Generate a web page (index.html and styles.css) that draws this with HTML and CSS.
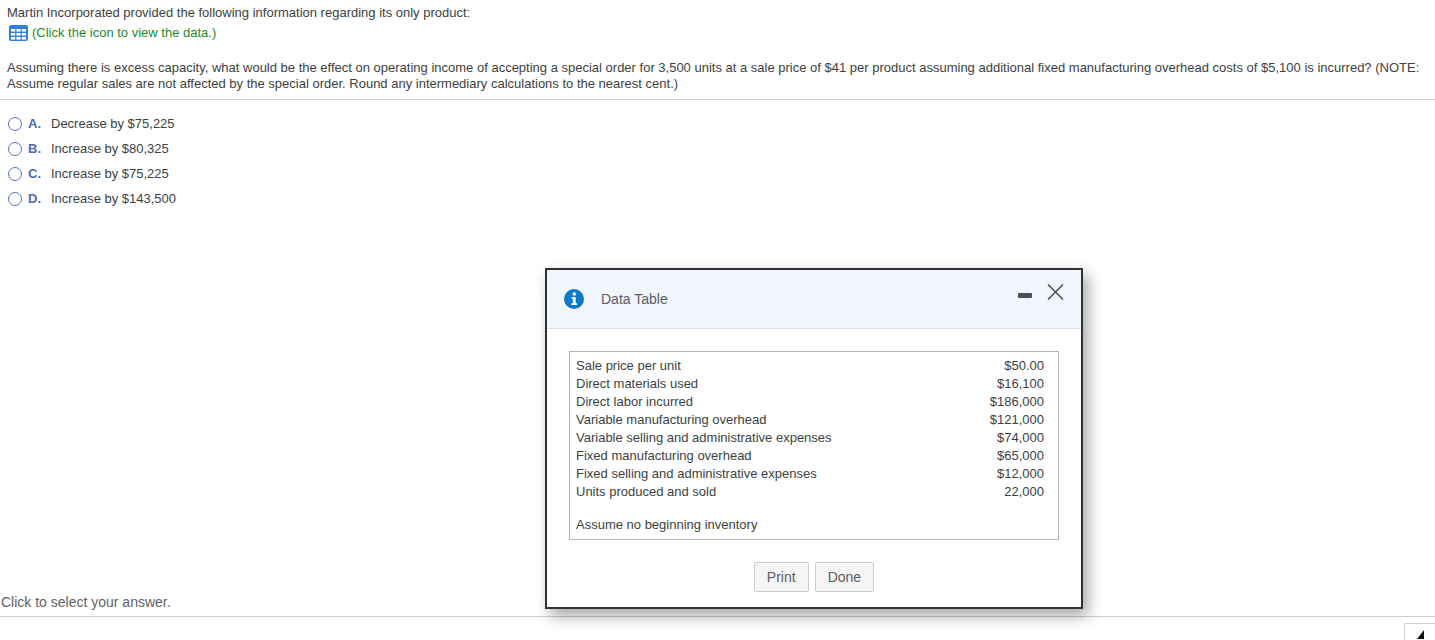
FILE: index.html
```html
<!DOCTYPE html>
<html lang="en">
<head>
<meta charset="utf-8">
<title>Data Table</title>
<link rel="stylesheet" href="styles.css">
</head>
<body>
<div class="page">
  <section class="question">
    <p class="intro">Martin Incorporated provided the following information regarding its only product:</p>
    <p class="hint">
      <svg class="grid-icon" width="19" height="16" viewBox="0 0 19 16" aria-hidden="true">
        <rect x="0" y="0" width="19" height="16" rx="2" fill="#2f7fd6"/>
        <g fill="#fff">
          <rect x="2" y="4" width="4.2" height="2.6"/><rect x="7.4" y="4" width="4.2" height="2.6"/><rect x="12.8" y="4" width="4.2" height="2.6"/>
          <rect x="2" y="8" width="4.2" height="2.6"/><rect x="7.4" y="8" width="4.2" height="2.6"/><rect x="12.8" y="8" width="4.2" height="2.6"/>
          <rect x="2" y="12" width="4.2" height="2.6"/><rect x="7.4" y="12" width="4.2" height="2.6"/><rect x="12.8" y="12" width="4.2" height="2.6"/>
        </g>
      </svg>
      <span>(Click the icon to view the data.)</span>
    </p>
    <p class="stem">Assuming there is excess capacity, what would be the effect on operating income of accepting a special order for 3,500 units at a sale price of $41 per product assuming additional fixed manufacturing overhead costs of $5,100 is incurred? (NOTE: Assume regular sales are not affected by the special order. Round any intermediary calculations to the nearest cent.)</p>
  </section>
  <ul class="options">
    <li class="option"><span class="radio"></span><b class="letter">A.</b><span>Decrease by $75,225</span></li>
    <li class="option"><span class="radio"></span><b class="letter">B.</b><span>Increase by $80,325</span></li>
    <li class="option"><span class="radio"></span><b class="letter">C.</b><span>Increase by $75,225</span></li>
    <li class="option"><span class="radio"></span><b class="letter">D.</b><span>Increase by $143,500</span></li>
  </ul>
  <footer class="footer">
    <p class="status">Click to select your answer.</p>
    <div class="footer-bar"><div class="next"><span class="arrow"></span></div></div>
  </footer>
</div>
<div class="modal">
  <header class="modal-head">
    <svg class="info" width="20" height="20" viewBox="0 0 20 20" aria-hidden="true">
      <circle cx="10" cy="10" r="10" fill="#0b78c8"/>
      <circle cx="10.3" cy="5" r="1.8" fill="#fff"/>
      <path d="M7.6 8h4.1v6.2h1.4V16H7.4v-1.8h1.5V9.8H7.6z" fill="#fff"/>
    </svg>
    <span class="modal-title">Data Table</span>
    <span class="minimize"></span>
    <svg class="close" width="17" height="16" viewBox="0 0 17 16" aria-hidden="true">
      <path d="M1 .5 16 15.5M16 .5 1 15.5" stroke="#4a4f55" stroke-width="1.5" fill="none"/>
    </svg>
  </header>
  <div class="modal-body">
    <div class="data-box">
      <table class="data">
        <tr><td>Sale price per unit</td><td class="num">$50.00</td></tr>
        <tr><td>Direct materials used</td><td class="num">$16,100</td></tr>
        <tr><td>Direct labor incurred</td><td class="num">$186,000</td></tr>
        <tr><td>Variable manufacturing overhead</td><td class="num">$121,000</td></tr>
        <tr><td>Variable selling and administrative expenses</td><td class="num">$74,000</td></tr>
        <tr><td>Fixed manufacturing overhead</td><td class="num">$65,000</td></tr>
        <tr><td>Fixed selling and administrative expenses</td><td class="num">$12,000</td></tr>
        <tr><td>Units produced and sold</td><td class="num">22,000</td></tr>
      </table>
      <p class="note">Assume no beginning inventory</p>
    </div>
    <div class="actions">
      <button class="btn print">Print</button>
      <button class="btn done">Done</button>
    </div>
  </div>
</div>
</body>
</html>
```
FILE: styles.css
```css
* { box-sizing: border-box; }
html, body { margin: 0; padding: 0; }
body {
  width: 1435px;
  height: 640px;
  overflow: hidden;
  position: relative;
  background: #fff;
  color: #3c3f43;
  font-family: "Liberation Sans", Arial, sans-serif;
  font-size: 13px;
}
p { margin: 0; }
.page { height: 640px; display: flex; flex-direction: column; }
.question { padding: 5px 7px 8px; border-bottom: 1px solid #cfcfcf; height: 100px; }
.intro { line-height: 16px; }
.hint { display: flex; align-items: center; gap: 4px; margin-top: 4px; line-height: 16px; color: #1f8a1f; padding-left: 2px; }
.grid-icon { flex: none; }
.stem { margin-top: 19px; line-height: 16px; }
.options { list-style: none; margin: 11px 0 0; padding: 0 0 0 8px; }
.option { display: flex; align-items: center; height: 25px; }
.radio { width: 14px; height: 14px; border: 1.3px solid #5a70bd; border-radius: 50%; flex: none; margin-right: 6px; }
.letter { width: 23px; color: #5168b8; flex: none; font-weight: bold; }
.footer { margin-top: auto; }
.status { padding-left: 1px; line-height: 16px; color: #5f6266; margin-bottom: 6px; font-size: 14px; }
.footer-bar { height: 24px; border-top: 1px solid #cfcfcf; display: flex; justify-content: flex-end; padding-top: 6px; }
.next { width: 31px; height: 30px; border: 1px solid #d5d5d5; border-right: 0; padding: 6px 0 0 12px; background: #fff; }
.arrow { display: block; width: 0; height: 0; border-style: solid; border-width: 0 0 9px 7px; border-color: transparent transparent #111 transparent; }
.modal {
  position: absolute;
  left: 545px;
  top: 268px;
  width: 538px;
  height: 341px;
  background: #fff;
  border: 2px solid #2f3336;
  box-shadow: 5px 7px 14px rgba(0,0,0,.35);
  display: flex;
  flex-direction: column;
}
.modal-head {
  height: 59px;
  background: #f1f6fd;
  border-bottom: 1px solid #d5e2ef;
  display: flex;
  align-items: center;
  padding: 0 17px;
  flex: none;
}
.info { flex: none; }
.modal-title { margin-left: 17px; font-size: 14px; color: #5a5e63; flex: 1; }
.minimize { width: 14px; height: 5px; background: #4a4f55; border-radius: 1px; margin-top: -8px; }
.close { margin: -14px 0 0 15px; flex: none; }
.modal-body { padding: 22px 22px 0; display: flex; flex-direction: column; flex: 1; }
.data-box { height: 189px; border: 1px solid #b5b5b5; padding: 5px 14px 0 6px; }
.data { width: 100%; border-collapse: collapse; }
.data td { padding: 0; height: 18px; line-height: 18px; }
.data .num { text-align: right; }
.note { margin-top: 15px; line-height: 18px; }
.actions { display: flex; justify-content: center; gap: 6px; margin-top: 22px; }
.btn {
  height: 30px;
  padding: 0 12px;
  background: #f5f5f5;
  border: 1px solid #ccc;
  border-radius: 2px;
  color: #5a5e63;
  font: 14px "Liberation Sans", Arial, sans-serif;
}
```
